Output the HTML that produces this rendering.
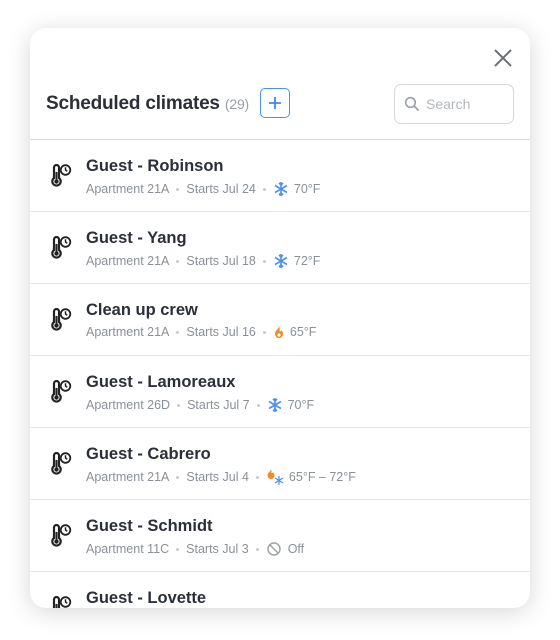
<!DOCTYPE html>
<html><head><style>
body{margin:0;width:560px;height:640px;background:#fff;font-family:"Liberation Sans",sans-serif;position:relative;overflow:hidden}
.card{position:absolute;left:30px;top:28px;width:500px;height:580px;background:#fff;border-radius:16px;box-shadow:0 4px 24px rgba(0,0,0,.16);overflow:hidden}
.x{position:absolute;left:463px;top:20px}
.h{position:absolute;left:16px;top:65px;font-size:19px;font-weight:bold;color:#2a2f38;letter-spacing:-.2px}
.h span{font-weight:normal;font-size:14px;color:#9aa0a8}
.plus{position:absolute;left:230px;top:60px;width:30px;height:30px;border:1px solid #4a90f0;border-radius:5px;box-sizing:border-box}
.search{position:absolute;left:364px;top:56px;width:120px;height:40px;border:1px solid #d5d8dc;border-radius:7px;box-sizing:border-box}
.search span{position:absolute;left:31px;top:11px;font-size:14px;color:#b3b7bc}
.hd{position:absolute;left:0;top:111px;width:500px;height:1px;background:#d8dadd}
.row{position:absolute;left:0;width:500px;height:72px;border-bottom:1px solid #e6e8ea;box-sizing:border-box}
.row svg.ic{position:absolute;left:20px;top:24px}
.t{position:absolute;left:56px;top:17px;font-size:16.5px;font-weight:bold;color:#2a2f38}
.s{position:absolute;left:56px;top:41px;font-size:12.5px;color:#8a9098;display:flex;align-items:center;white-space:nowrap}
.d{display:inline-block;width:3px;height:3px;border-radius:2px;background:#c8cbcf;margin:0 7px}
</style></head><body>
<div class="card">
<svg class="x" width="20" height="20" viewBox="0 0 20 20"><path d="M2 2L18 18M18 2L2 18" stroke="#6b7078" stroke-width="2"/></svg>
<div class="h">Scheduled climates <span>(29)</span></div>
<div class="plus"><svg width="28" height="28" viewBox="0 0 28 28"><path d="M14 8v12M8 14h12" stroke="#3a86f0" stroke-width="1.8"/></svg></div>
<div class="search"><svg style="position:absolute;left:9px;top:11px" width="16" height="16" viewBox="0 0 16 16"><circle cx="6.5" cy="6.5" r="4.8" fill="none" stroke="#9aa0a6" stroke-width="1.6"/><path d="M10 10l4.5 4.5" stroke="#9aa0a6" stroke-width="1.8"/></svg><span>Search</span></div>
<div class="hd"></div>
<div id="rows"></div>
</div>
<script>
var ic='<svg class="ic" width="22" height="25" viewBox="0 0 22 25"><path d="M4 3.5a2.5 2.5 0 0 1 5 0V14a4.2 4.2 0 1 1-5 0z" fill="none" stroke="#222" stroke-width="2.2"/><rect x="5.5" y="8" width="2" height="8" fill="#222"/><circle cx="6.5" cy="17.5" r="2.2" fill="#222"/><circle cx="15.5" cy="6" r="4.8" fill="#fff" stroke="#222" stroke-width="1.8"/><path d="M15.5 3.3V6l1.8 1.3" fill="none" stroke="#222" stroke-width="1.5"/></svg>';
var snow='<svg width="16" height="16" viewBox="0 0 16 16" style="margin-right:5px"><g stroke="#4a90f0" stroke-width="1.6" fill="none"><path d="M8 1v14M2 4.5l12 7M2 11.5l12-7"/><path d="M6 2l2 2 2-2M6 14l2-2 2 2"/></g></svg>';
var fire='<svg width="12" height="14" viewBox="0 0 12 14" style="margin-right:5px"><path d="M6 1C6 4 2 5 2 9a4 4 0 0 0 8 0c0-2-1-3-1.5-4C8 6.5 7 7 6.5 6 7 4 6.5 2 6 1z" fill="#f08a24"/><circle cx="6" cy="10" r="1.6" fill="#fff"/></svg>';
var both='<svg width="20" height="16" viewBox="0 0 20 16" style="margin-right:3px"><path d="M5 0C5 2.5 1.5 3.5 1.5 6.5a3.5 3.5 0 0 0 7 0C8.5 5 7.5 4 7 3c-.5 1.2-1.3 1.5-1.7.8C5.8 2.5 5.3 1 5 0z" fill="#f08a24"/><g stroke="#4a90f0" stroke-width="1.2"><path d="M13 7v9M9 9l8 5M9 14l8-5"/></g></svg>';
var off='<svg width="16" height="16" viewBox="0 0 16 16" style="margin-right:6px"><circle cx="8" cy="8" r="6" fill="none" stroke="#9aa0a6" stroke-width="1.4"/><path d="M3.8 3.8l8.4 8.4" stroke="#9aa0a6" stroke-width="1.4"/></svg>';
var d=[["Guest - Robinson","Apartment 21A","Starts Jul 24",snow+"70°F"],["Guest - Yang","Apartment 21A","Starts Jul 18",snow+"72°F"],["Clean up crew","Apartment 21A","Starts Jul 16",fire+"65°F"],["Guest - Lamoreaux","Apartment 26D","Starts Jul 7",snow+"70°F"],["Guest - Cabrero","Apartment 21A","Starts Jul 4",both+"65°F – 72°F"],["Guest - Schmidt","Apartment 11C","Starts Jul 3",off+"Off"],["Guest - Lovette","Apartment 21A","Starts Jul 1",snow+"70°F"]];
var h='';d.forEach(function(r,i){h+='<div class="row" style="top:'+(112+i*72)+'px">'+ic+'<div class="t">'+r[0]+'</div><div class="s">'+r[1]+'<span class="d"></span>'+r[2]+'<span class="d"></span>'+r[3]+'</div></div>';});
document.getElementById('rows').innerHTML=h;
</script>
</body></html>
